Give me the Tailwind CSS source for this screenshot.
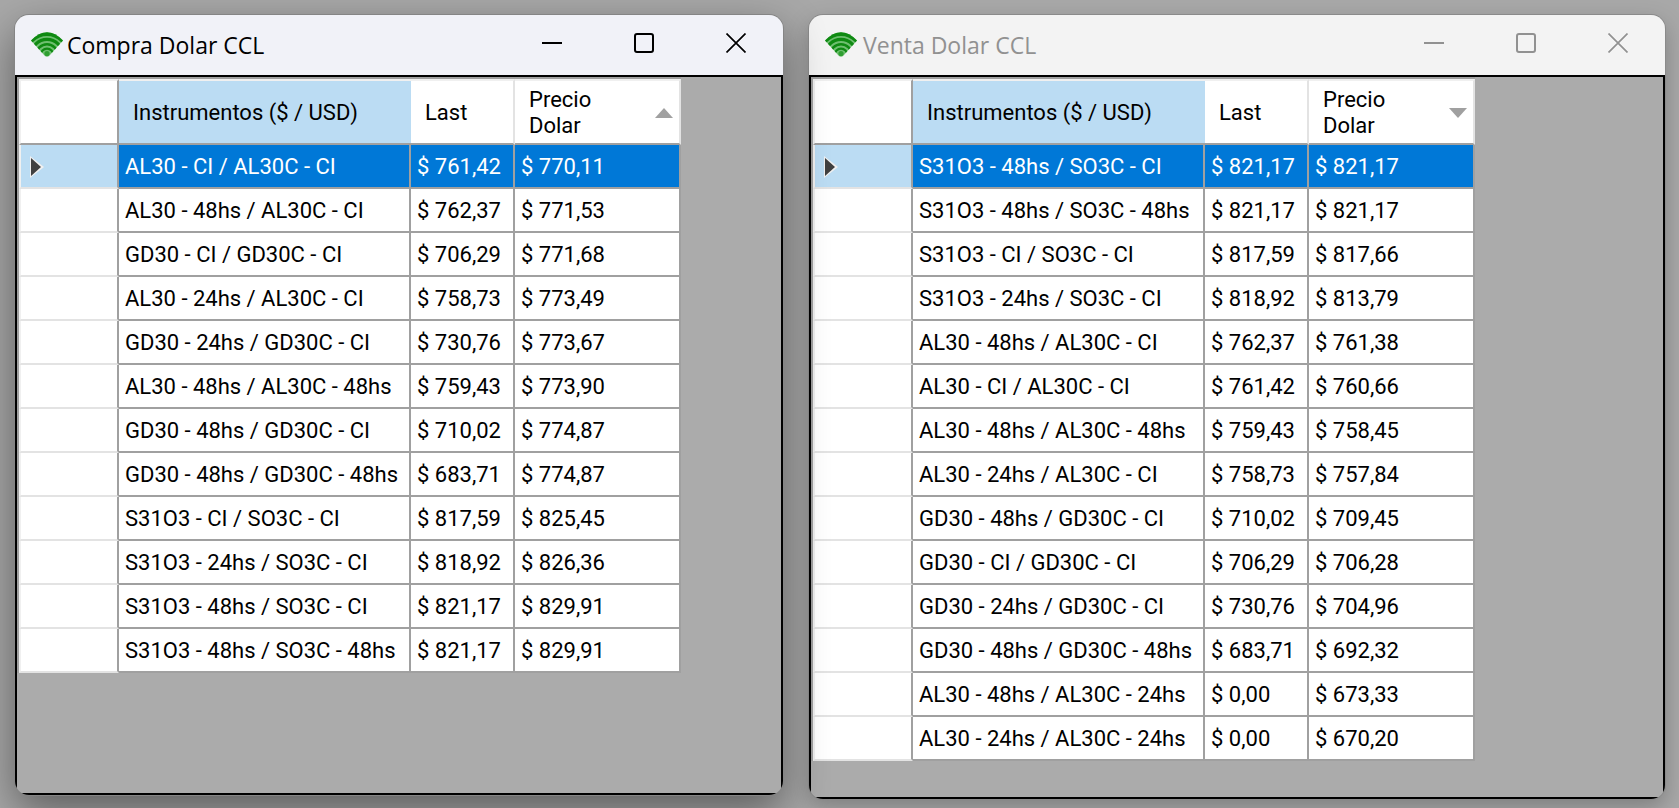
<!DOCTYPE html>
<html lang="es">
  <head>
    <meta charset="UTF-8" />
    <meta name="viewport" content="width=device-width, initial-scale=1.0" />
    <title>Dolar CCL</title>
    <script src="https://cdn.jsdelivr.net/npm/@tailwindcss/browser@4"></script>
  </head>
  <body class="bg-[#a8a8a8] min-h-screen overflow-hidden">
    <!-- Shared icons -->
    <svg class="absolute size-0">
      <defs>
        <clipPath id="wedge">
          <path d="M0 8.5Q16 -8 32 8.5L18.5 23.5Q16 26 13.5 23.5Z" />
        </clipPath>
        <symbol id="wifi" viewBox="0 0 32 25">
          <g clip-path="url(#wedge)">
            <path d="M0 0H32V25H0Z" fill="#6fbf70" />
            <g fill="none" stroke="#0f8a12">
              <circle cx="16" cy="23" r="21" stroke-width="4" />
              <circle cx="16" cy="23" r="15.6" stroke-width="3.2" />
              <circle cx="16" cy="23" r="10.8" stroke-width="2.6" />
              <circle cx="16" cy="23" r="6.4" stroke-width="2.2" />
            </g>
            <circle cx="16" cy="21.5" r="2.6" fill="#2f9f31" />
          </g>
        </symbol>
        <symbol id="minimize" viewBox="0 0 20 20">
          <path d="M0 10H20" stroke="currentColor" stroke-width="2" />
        </symbol>
        <symbol id="maximize" viewBox="0 0 20 20">
          <rect x="1" y="1" width="18" height="18" rx="2" fill="none" stroke="currentColor" stroke-width="2" />
        </symbol>
        <symbol id="close" viewBox="0 0 20 20">
          <path d="M.5 .5L19.5 19.5M19.5 .5L.5 19.5" stroke="currentColor" stroke-width="1.7" />
        </symbol>
        <symbol id="marker" viewBox="0 0 16 22">
          <path d="M1 0L15 11L1 22Z" fill="#f0f0f0" />
          <path d="M2 2L12 11L2 20Z" fill="#404040" />
        </symbol>
      </defs>
    </svg>

    <main class="flex items-start gap-[26px] pt-[15px] pl-[15px] pr-[14px]">
      <!-- Compra -->
      <section
        class="relative z-10 flex-[768] min-w-0 rounded-[14px] overflow-hidden bg-[#ababab] ring-1 ring-[#858585] shadow-[0_16px_44px_rgba(0,0,0,0.45)]"
      >
        <header class="flex h-[60px] bg-[#f1f2f8] text-black">
          <div class="flex flex-1 items-center pl-4">
            <svg class="w-8 h-[25px] mb-0.5"><use href="#wifi" /></svg>
            <h1 class="pl-1 text-[23px] font-['Open_Sans','Noto_Sans',sans-serif]">Compra Dolar CCL</h1>
          </div>
          <div class="flex pr-px">
            <button type="button" aria-label="Minimizar" class="flex w-[92px] items-center justify-center pb-1">
              <svg class="size-5"><use href="#minimize" /></svg>
            </button>
            <button type="button" aria-label="Maximizar" class="flex w-[92px] items-center justify-center pb-1">
              <svg class="size-5"><use href="#maximize" /></svg>
            </button>
            <button type="button" aria-label="Cerrar" class="flex w-[92px] items-center justify-center pb-1">
              <svg class="size-5"><use href="#close" /></svg>
            </button>
          </div>
        </header>
        <div class="border-2 border-black pb-[120px]">
          <table
            class="w-[664px] table-fixed border-separate border-spacing-0 border-t-2 border-l-2 border-[#a0a0a0] bg-white text-left text-[22px] leading-[26px] text-black font-['Roboto','Liberation_Sans',sans-serif] [&_th]:font-normal [&_th]:pt-0.5 [&_td]:h-11 [&_td]:pt-0.5 [&_td]:pl-1.5 [&_td]:border-r-2 [&_td]:border-b-2 [&_td]:border-[#a0a0a0] [&_td]:whitespace-nowrap [&_tbody_th]:border-l-2 [&_tbody_th]:border-r-2 [&_tbody_th]:border-b-2 [&_tbody_th]:border-l-[#f0f0f0] [&_tbody_th]:border-r-[#a0a0a0] [&_tbody_th]:border-b-[#e3e3e3]"
          >
            <colgroup>
              <col class="w-[100px]" />
              <col class="w-[292px]" />
              <col class="w-[104px]" />
              <col class="w-[166px]" />
            </colgroup>
            <thead>
              <tr class="h-[66px]">
                <th class="border-2 border-t-[#f0f0f0] border-l-[#f0f0f0] border-r-[#a0a0a0] border-b-[#a0a0a0]"></th>
                <th scope="col" class="border-y-2 border-t-[#f0f0f0] border-b-[#a0a0a0] bg-[#bbdcf3] pl-3.5">Instrumentos ($ / USD)</th>
                <th scope="col" class="border-y-2 border-r-2 border-t-[#f0f0f0] border-r-[#e3e3e3] border-b-[#a0a0a0] pl-3.5">Last</th>
                <th scope="col" aria-sort="ascending" class="border-y-2 border-r-2 border-t-[#f0f0f0] border-r-[#e3e3e3] border-b-[#a0a0a0] pl-3.5 pr-1.5">
                  <div class="flex items-center justify-between">
                    <span>Precio<br />Dolar</span>
                    <svg class="w-[18px] h-2.5" viewBox="0 0 18 10"><path d="M9 0L18 10H0Z" fill="#a0a0a0" /></svg>
                  </div>
                </th>
              </tr>
            </thead>
            <tbody>
              <tr class="bg-[#0078d7] text-white">
                <th class="bg-[#bbdcf3] pl-2"><svg class="w-4 h-[22px]"><use href="#marker" /></svg></th>
                <td>AL30 - CI / AL30C - CI</td><td>$ 761,42</td><td>$ 770,11</td>
              </tr>
              <tr><th></th><td>AL30 - 48hs / AL30C - CI</td><td>$ 762,37</td><td>$ 771,53</td></tr>
              <tr><th></th><td>GD30 - CI / GD30C - CI</td><td>$ 706,29</td><td>$ 771,68</td></tr>
              <tr><th></th><td>AL30 - 24hs / AL30C - CI</td><td>$ 758,73</td><td>$ 773,49</td></tr>
              <tr><th></th><td>GD30 - 24hs / GD30C - CI</td><td>$ 730,76</td><td>$ 773,67</td></tr>
              <tr><th></th><td>AL30 - 48hs / AL30C - 48hs</td><td>$ 759,43</td><td>$ 773,90</td></tr>
              <tr><th></th><td>GD30 - 48hs / GD30C - CI</td><td>$ 710,02</td><td>$ 774,87</td></tr>
              <tr><th></th><td>GD30 - 48hs / GD30C - 48hs</td><td>$ 683,71</td><td>$ 774,87</td></tr>
              <tr><th></th><td>S31O3 - CI / SO3C - CI</td><td>$ 817,59</td><td>$ 825,45</td></tr>
              <tr><th></th><td>S31O3 - 24hs / SO3C - CI</td><td>$ 818,92</td><td>$ 826,36</td></tr>
              <tr><th></th><td>S31O3 - 48hs / SO3C - CI</td><td>$ 821,17</td><td>$ 829,91</td></tr>
              <tr><th></th><td>S31O3 - 48hs / SO3C - 48hs</td><td>$ 821,17</td><td>$ 829,91</td></tr>
            </tbody>
          </table>
        </div>
      </section>

      <!-- Venta -->
      <section
        class="flex-[856] min-w-0 rounded-[14px] overflow-hidden bg-[#ababab] ring-1 ring-[#8a8a8a] shadow-[0_8px_22px_rgba(0,0,0,0.25)]"
      >
        <header class="flex h-[60px] bg-[#f3f3f3] text-[#919191]">
          <div class="flex flex-1 items-center pl-4">
            <svg class="w-8 h-[25px] mb-0.5"><use href="#wifi" /></svg>
            <h1 class="pl-1.5 text-[23px] font-['Open_Sans','Noto_Sans',sans-serif]">Venta Dolar CCL</h1>
          </div>
          <div class="flex pr-px">
            <button type="button" aria-label="Minimizar" class="flex w-[92px] items-center justify-center pb-1">
              <svg class="size-5"><use href="#minimize" /></svg>
            </button>
            <button type="button" aria-label="Maximizar" class="flex w-[92px] items-center justify-center pb-1">
              <svg class="size-5"><use href="#maximize" /></svg>
            </button>
            <button type="button" aria-label="Cerrar" class="flex w-[92px] items-center justify-center pb-1">
              <svg class="size-5"><use href="#close" /></svg>
            </button>
          </div>
        </header>
        <div class="border-2 border-black pb-9">
          <table
            class="w-[664px] table-fixed border-separate border-spacing-0 border-t-2 border-l-2 border-[#a0a0a0] bg-white text-left text-[22px] leading-[26px] text-black font-['Roboto','Liberation_Sans',sans-serif] [&_th]:font-normal [&_th]:pt-0.5 [&_td]:h-11 [&_td]:pt-0.5 [&_td]:pl-1.5 [&_td]:border-r-2 [&_td]:border-b-2 [&_td]:border-[#a0a0a0] [&_td]:whitespace-nowrap [&_tbody_th]:border-l-2 [&_tbody_th]:border-r-2 [&_tbody_th]:border-b-2 [&_tbody_th]:border-l-[#f0f0f0] [&_tbody_th]:border-r-[#a0a0a0] [&_tbody_th]:border-b-[#e3e3e3]"
          >
            <colgroup>
              <col class="w-[100px]" />
              <col class="w-[292px]" />
              <col class="w-[104px]" />
              <col class="w-[166px]" />
            </colgroup>
            <thead>
              <tr class="h-[66px]">
                <th class="border-2 border-t-[#f0f0f0] border-l-[#f0f0f0] border-r-[#a0a0a0] border-b-[#a0a0a0]"></th>
                <th scope="col" class="border-y-2 border-t-[#f0f0f0] border-b-[#a0a0a0] bg-[#bbdcf3] pl-3.5">Instrumentos ($ / USD)</th>
                <th scope="col" class="border-y-2 border-r-2 border-t-[#f0f0f0] border-r-[#e3e3e3] border-b-[#a0a0a0] pl-3.5">Last</th>
                <th scope="col" aria-sort="descending" class="border-y-2 border-r-2 border-t-[#f0f0f0] border-r-[#e3e3e3] border-b-[#a0a0a0] pl-3.5 pr-1.5">
                  <div class="flex items-center justify-between">
                    <span>Precio<br />Dolar</span>
                    <svg class="w-[18px] h-2.5" viewBox="0 0 18 10"><path d="M9 10L18 0H0Z" fill="#a0a0a0" /></svg>
                  </div>
                </th>
              </tr>
            </thead>
            <tbody>
              <tr class="bg-[#0078d7] text-white">
                <th class="bg-[#bbdcf3] pl-2"><svg class="w-4 h-[22px]"><use href="#marker" /></svg></th>
                <td>S31O3 - 48hs / SO3C - CI</td><td>$ 821,17</td><td>$ 821,17</td>
              </tr>
              <tr><th></th><td>S31O3 - 48hs / SO3C - 48hs</td><td>$ 821,17</td><td>$ 821,17</td></tr>
              <tr><th></th><td>S31O3 - CI / SO3C - CI</td><td>$ 817,59</td><td>$ 817,66</td></tr>
              <tr><th></th><td>S31O3 - 24hs / SO3C - CI</td><td>$ 818,92</td><td>$ 813,79</td></tr>
              <tr><th></th><td>AL30 - 48hs / AL30C - CI</td><td>$ 762,37</td><td>$ 761,38</td></tr>
              <tr><th></th><td>AL30 - CI / AL30C - CI</td><td>$ 761,42</td><td>$ 760,66</td></tr>
              <tr><th></th><td>AL30 - 48hs / AL30C - 48hs</td><td>$ 759,43</td><td>$ 758,45</td></tr>
              <tr><th></th><td>AL30 - 24hs / AL30C - CI</td><td>$ 758,73</td><td>$ 757,84</td></tr>
              <tr><th></th><td>GD30 - 48hs / GD30C - CI</td><td>$ 710,02</td><td>$ 709,45</td></tr>
              <tr><th></th><td>GD30 - CI / GD30C - CI</td><td>$ 706,29</td><td>$ 706,28</td></tr>
              <tr><th></th><td>GD30 - 24hs / GD30C - CI</td><td>$ 730,76</td><td>$ 704,96</td></tr>
              <tr><th></th><td>GD30 - 48hs / GD30C - 48hs</td><td>$ 683,71</td><td>$ 692,32</td></tr>
              <tr><th></th><td>AL30 - 48hs / AL30C - 24hs</td><td>$ 0,00</td><td>$ 673,33</td></tr>
              <tr><th></th><td>AL30 - 24hs / AL30C - 24hs</td><td>$ 0,00</td><td>$ 670,20</td></tr>
            </tbody>
          </table>
        </div>
      </section>
    </main>
  </body>
</html>
